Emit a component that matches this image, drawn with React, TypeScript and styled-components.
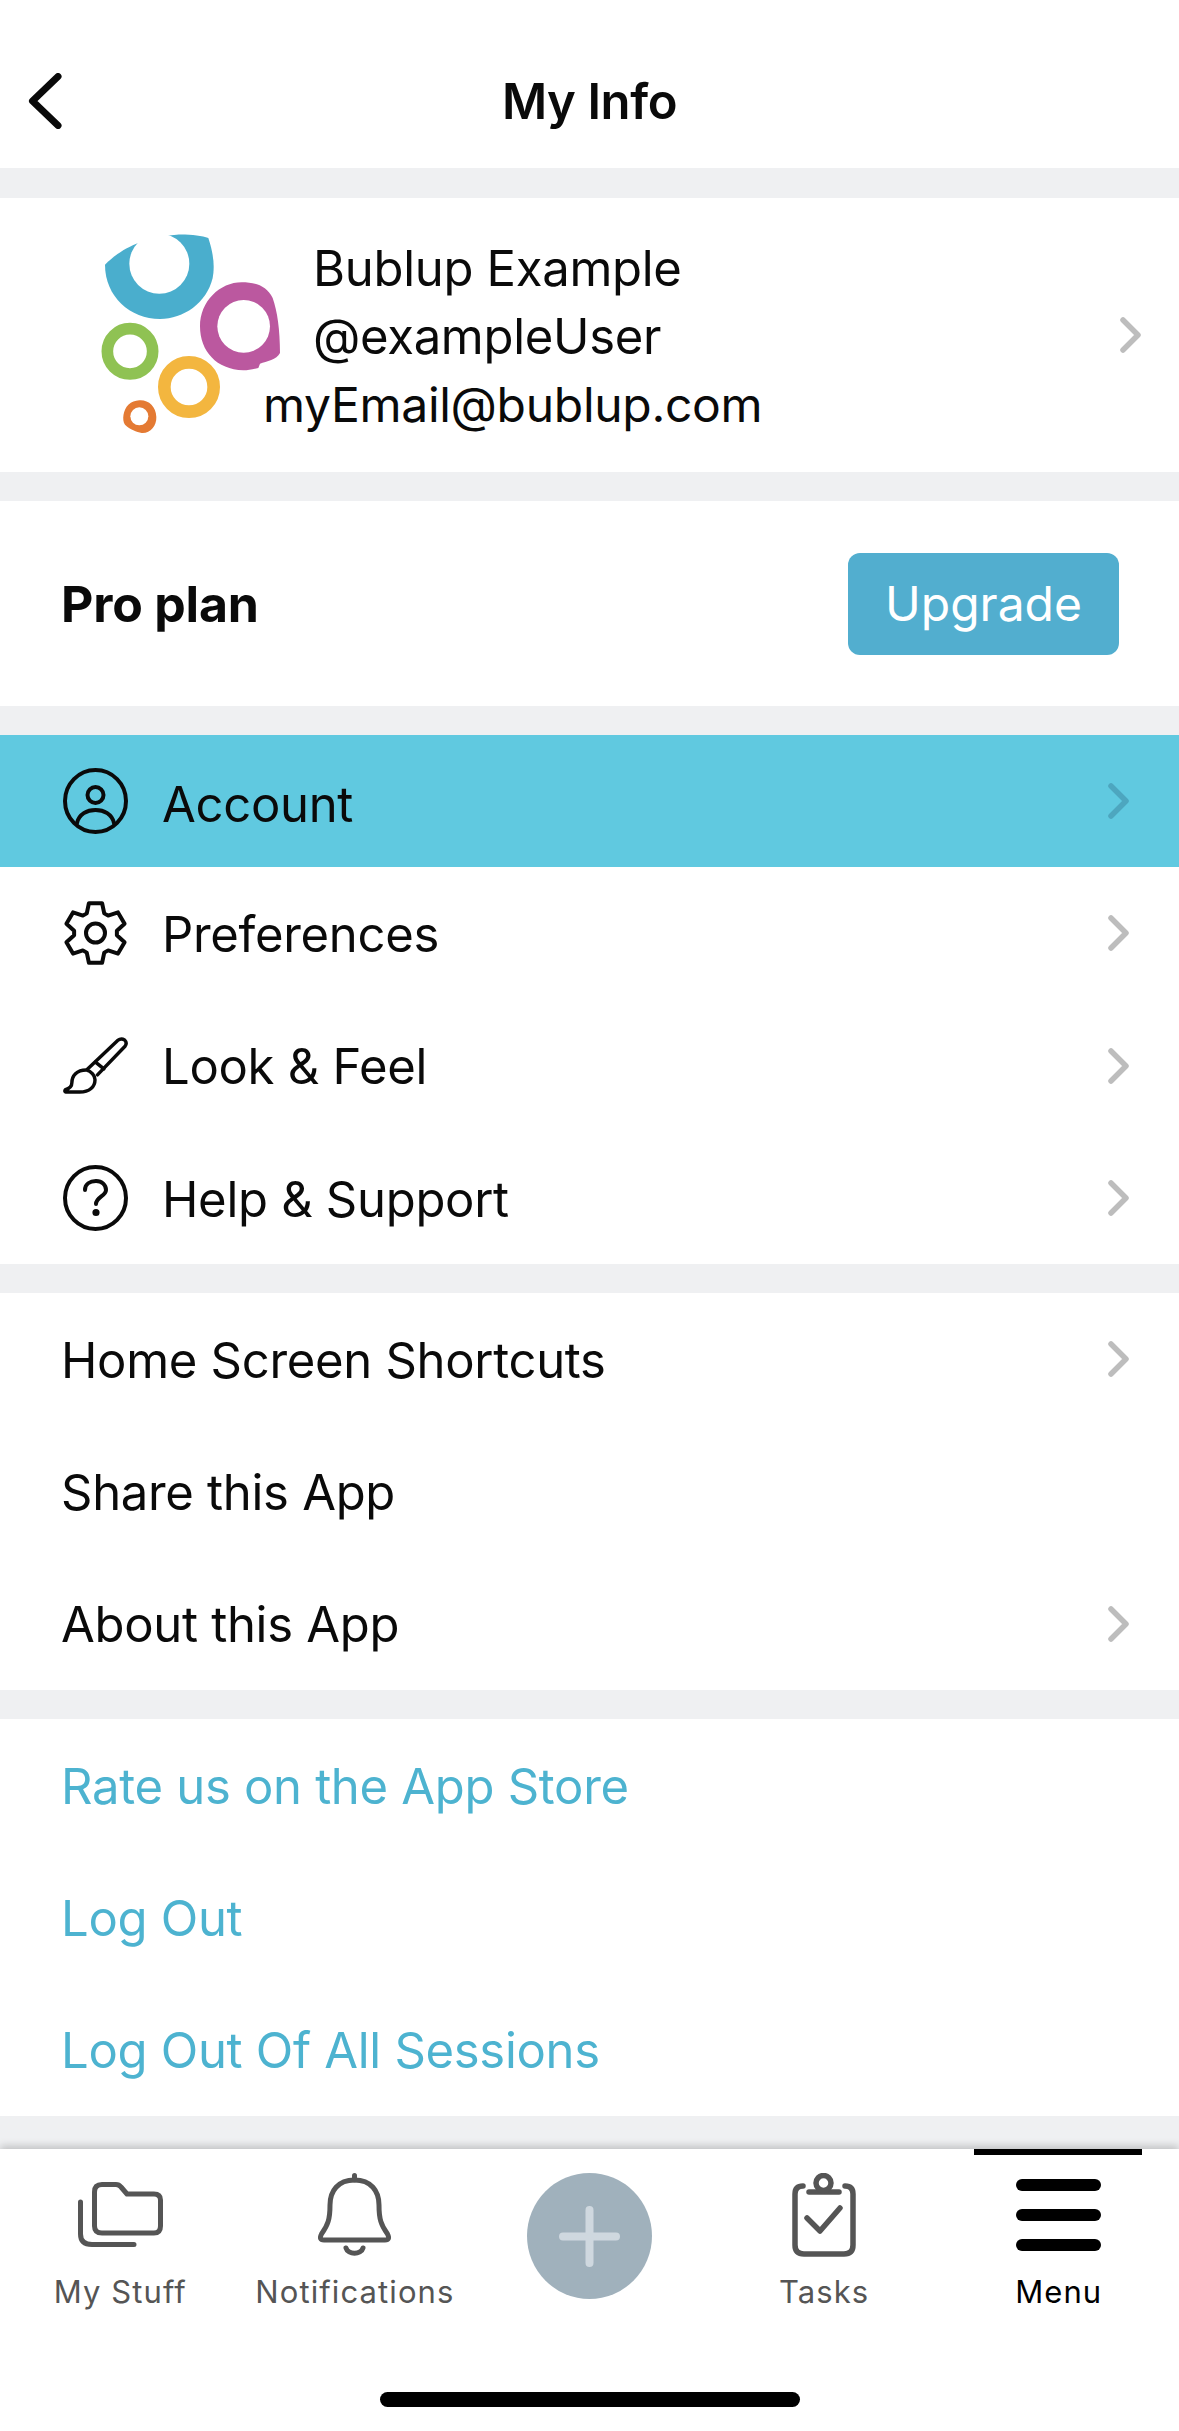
import React from "react";
import styled, { createGlobalStyle } from "styled-components";

const Global = createGlobalStyle`
  html, body { margin: 0; padding: 0; background: #fff; }
  * { box-sizing: border-box; }
`;

const Page = styled.div`
  width: 1179px;
  height: 2431px;
  overflow: hidden;
  display: flex;
  flex-direction: column;
  background: #eff0f2;
  font-family: Inter, "Liberation Sans", sans-serif;
  color: #0a0a0a;
`;

const Header = styled.header`
  height: 168px;
  flex: none;
  background: #fff;
  display: grid;
  grid-template-columns: 1fr auto 1fr;
  align-items: center;
  padding: 34px 28px 0;
`;

const BackIcon = styled.svg`
  width: 34px;
  height: 56px;
  margin-top: -1px;
`;

const Title = styled.h1`
  margin: 0;
  font-size: 49px;
  font-weight: 600;
  letter-spacing: -0.4px;
  line-height: 1;
`;

const Main = styled.main`
  flex: 1;
  display: flex;
  flex-direction: column;
  gap: 29px;
  padding-top: 30px;
`;

const Section = styled.section`
  background: #fff;
  display: flex;
  flex-direction: column;
`;

const Profile = styled(Section)`
  height: 274px;
  flex-direction: row;
  align-items: flex-start;
  padding: 35px 38px 0 100px;
`;

const LogoMark = styled.svg`
  width: 180px;
  height: 202px;
  flex: none;
`;

const ProfileText = styled.div`
  flex: 1;
  margin: 2px 0 0 -17px;
  font-size: 48px;
  font-weight: 400;
  line-height: 68px;
  letter-spacing: -0.3px;
`;

const IndentedLine = styled.div`
  margin-left: 50px;
  font-size: 49px;
`;

const ProfileChevron = styled.div`
  align-self: center;
  margin-top: -35px;
  display: flex;
`;

const Plan = styled(Section)`
  height: 205px;
  flex-direction: row;
  align-items: center;
  justify-content: space-between;
  padding: 0 60px 0 61px;
`;

const PlanName = styled.div`
  font-size: 50px;
  font-weight: 700;
  letter-spacing: -0.2px;
`;

const UpgradeButton = styled.button`
  width: 271px;
  height: 102px;
  border: none;
  border-radius: 12px;
  background: #52aecf;
  color: #fff;
  font: 400 48px Inter, "Liberation Sans", sans-serif;
  padding: 0;
`;

const Row = styled.div<{ $active?: boolean; $link?: boolean; $icon?: boolean }>`
  height: 132.3px;
  flex: none;
  display: flex;
  align-items: center;
  padding: 0 50px 0 ${(p) => (p.$icon ? "63px" : "61px")};
  background: ${(p) => (p.$active ? "#60c9e0" : "#fff")};
  color: ${(p) => (p.$link ? "#4db3d0" : "#0a0a0a")};
`;

const IconSlot = styled.div`
  width: 65px;
  height: 66px;
  flex: none;
  margin-right: 34px;
  display: flex;
  align-items: center;
  justify-content: center;
`;

const RowLabel = styled.span<{ $active?: boolean }>`
  flex: 1;
  font-size: 49px;
  letter-spacing: -0.3px;
  line-height: 1;
  margin-top: ${(p) => (p.$active ? "6px" : "2px")};
`;

const ChevronIcon = styled.svg<{ $tone?: string }>`
  width: 21px;
  height: 36px;
  flex: none;
  stroke: ${(p) => p.$tone || "#bdbdbd"};
`;

const TabBar = styled.nav`
  position: relative;
  height: 282px;
  flex: none;
  background: #fff;
  box-shadow: 0 -3px 8px rgba(0, 0, 0, 0.2);
  display: grid;
  grid-template-columns: repeat(5, 1fr);
  padding: 0 3px;
`;

const Tab = styled.div<{ $active?: boolean }>`
  position: relative;
  display: flex;
  flex-direction: column;
  align-items: center;
  color: ${(p) => (p.$active ? "#000" : "#555")};
  &::before {
    content: "";
    display: ${(p) => (p.$active ? "block" : "none")};
    position: absolute;
    top: 0;
    left: 33px;
    width: 168px;
    height: 6px;
    background: #000;
  }
`;

const TabIconBox = styled.div`
  height: 108px;
  width: 100%;
  padding-top: 24px;
  display: flex;
  justify-content: center;
`;

const TabLabel = styled.div`
  font-size: 31px;
  letter-spacing: 1.1px;
  line-height: 36px;
  margin-top: 17px;
`;

const MenuBars = styled.div`
  width: 85px;
  margin-top: 6px;
  display: flex;
  flex-direction: column;
  gap: 18px;
`;

const MenuBar = styled.i`
  display: block;
  height: 12px;
  border-radius: 6px;
  background: #000;
`;

const AddTab = styled.div`
  display: flex;
  justify-content: center;
  padding-top: 24px;
`;

const AddButton = styled.button`
  width: 125px;
  height: 126px;
  border: none;
  padding: 0;
  border-radius: 50%;
  background: #a0b1bc;
  display: flex;
  align-items: center;
  justify-content: center;
`;

const HomeIndicator = styled.div`
  position: absolute;
  left: 380px;
  top: 243px;
  width: 420px;
  height: 15px;
  border-radius: 8px;
  background: #000;
`;

const Chevron = ({ tone }: { tone?: string }) => (
  <ChevronIcon $tone={tone} viewBox="0 0 21 36" fill="none" strokeWidth="5.5" strokeLinecap="round" strokeLinejoin="round">
    <path d="M3 3 L18 18 L3 33" />
  </ChevronIcon>
);

const line = { fill: "none", stroke: "#0a0a0a", strokeWidth: 4, strokeLinecap: "round", strokeLinejoin: "round" } as const;

const gearPath = (() => {
  const pts: string[] = [];
  const cx = 32.5;
  const cy = 33;
  const pt = (r: number, deg: number) => {
    const a = (deg * Math.PI) / 180;
    return `${(cx + r * Math.cos(a)).toFixed(2)} ${(cy + r * Math.sin(a)).toFixed(2)}`;
  };
  for (let i = 0; i < 6; i++) {
    const a = -90 + 60 * i;
    pts.push(pt(21.5, a - 24), pt(30.5, a - 12.5), pt(30.5, a + 12.5), pt(21.5, a + 24));
  }
  return "M" + pts.join(" L") + " Z";
})();

const AccountIcon = () => (
  <svg width="65" height="66" viewBox="0 0 65 66" {...line}>
    <ellipse cx="32.5" cy="33" rx="30.5" ry="31" />
    <circle cx="32.5" cy="27" r="8" />
    <path d="M14 55 C16 46 24 42 32.5 42 C41 42 49 46 51 55" />
  </svg>
);

const GearIcon = () => (
  <svg width="65" height="66" viewBox="0 0 65 66" {...line}>
    <path d={gearPath} />
    <circle cx="32.5" cy="33" r="9.5" />
  </svg>
);

const BrushIcon = () => (
  <svg width="65" height="57" viewBox="0 0 66 57" {...line} strokeWidth={3.5}>
    <path d="M25 32 L55.5 3 Q59 0.5 62.5 2.5 Q65.5 5.5 63 9 L35 38" />
    <path d="M33 25 L41.5 32" />
    <path d="M23.5 33 C14 33 9 39 9 46 C9 50 6 52 2.5 53 Q1 55 3 55.5 H17 C27 55.5 32.5 50 32.5 43 C32.5 39 29 34.5 23.5 33 Z" />
  </svg>
);

const HelpIcon = () => (
  <svg width="65" height="66" viewBox="0 0 65 66" {...line}>
    <ellipse cx="32.5" cy="33" rx="30.5" ry="31" />
    <path d="M22 25 C22 19 27 16 33 16 C39 16 43 20 43 25 C43 31 33 32 33 39" />
    <circle cx="33" cy="47.5" r="1.6" fill="#0a0a0a" />
  </svg>
);

const Logo = () => (
  <LogoMark viewBox="60 40 540 606">
    <path d="M75 135 C120 90 180 55 290 45 C330 44 365 48 385 55 C400 100 405 140 398 175 C380 250 310 298 240 298 C150 298 75 230 75 135 Z" fill="#4aaecd" />
    <circle cx="238" cy="132" r="90" fill="#fff" />
    <path d="M485 188 C525 188 560 198 578 235 C592 275 600 330 600 400 C590 420 560 425 540 432 L535 445 C515 450 505 452 490 452 C410 450 360 395 360 320 C360 245 420 188 485 188 Z" fill="#bb589f" />
    <circle cx="491" cy="320" r="79" fill="#fff" />
    <circle cx="150" cy="395" r="68" fill="none" stroke="#8fc253" strokeWidth="35" />
    <circle cx="327" cy="502" r="74" fill="none" stroke="#f3b63f" strokeWidth="38" />
    <path d="M178 542 C205 540 228 560 229 592 C230 620 210 642 185 640 C170 636 150 630 135 615 C125 600 130 570 145 555 C155 547 165 543 178 542 Z" fill="#e47a33" />
    <circle cx="178" cy="590" r="27" fill="#fff" />
  </LogoMark>
);

const iconRows = [
  { label: "Account", icon: <AccountIcon />, active: true },
  { label: "Preferences", icon: <GearIcon /> },
  { label: "Look & Feel", icon: <BrushIcon /> },
  { label: "Help & Support", icon: <HelpIcon /> },
];

const plainRows = [
  { label: "Home Screen Shortcuts", chevron: true },
  { label: "Share this App", chevron: false },
  { label: "About this App", chevron: true },
];

const linkRows = ["Rate us on the App Store", "Log Out", "Log Out Of All Sessions"];

const tabStroke = { fill: "none", stroke: "#555", strokeLinecap: "round", strokeLinejoin: "round" } as const;

export default function App() {
  return (
    <Page>
      <Global />
      <Header>
        <BackIcon viewBox="0 0 34 56" fill="none" stroke="#0a0a0a" strokeWidth="7" strokeLinecap="round" strokeLinejoin="round">
          <path d="M30 3.5 L4.5 28 L30 52.5" />
        </BackIcon>
        <Title>My Info</Title>
      </Header>
      <Main>
        <Profile>
          <Logo />
          <ProfileText>
            <IndentedLine>Bublup Example</IndentedLine>
            <IndentedLine>@exampleUser</IndentedLine>
            <div>myEmail@bublup.com</div>
          </ProfileText>
          <ProfileChevron>
            <Chevron />
          </ProfileChevron>
        </Profile>
        <Plan>
          <PlanName>Pro plan</PlanName>
          <UpgradeButton>Upgrade</UpgradeButton>
        </Plan>
        <Section>
          {iconRows.map((r) => (
            <Row key={r.label} $icon $active={r.active}>
              <IconSlot>{r.icon}</IconSlot>
              <RowLabel $active={r.active}>{r.label}</RowLabel>
              <Chevron tone={r.active ? "#4da6bf" : undefined} />
            </Row>
          ))}
        </Section>
        <Section>
          {plainRows.map((r) => (
            <Row key={r.label}>
              <RowLabel>{r.label}</RowLabel>
              {r.chevron && <Chevron />}
            </Row>
          ))}
        </Section>
        <Section>
          {linkRows.map((l) => (
            <Row key={l} $link>
              <RowLabel>{l}</RowLabel>
            </Row>
          ))}
        </Section>
      </Main>
      <TabBar>
        <Tab>
          <TabIconBox>
            <svg width="85" height="65" viewBox="0 0 85 65" {...tabStroke} strokeWidth="5" style={{ marginTop: 9 }}>
              <path d="M24 2.5 H38 Q41 2.5 43 5 L49 12 H76 Q82.5 12 82.5 18 V44 Q82.5 51 76 51 H24 Q16.5 51 16.5 44 V10 Q16.5 2.5 24 2.5 Z" />
              <path d="M2.5 20 V52 Q2.5 62.5 14 62.5 H56" />
            </svg>
          </TabIconBox>
          <TabLabel>My Stuff</TabLabel>
        </Tab>
        <Tab>
          <TabIconBox>
            <svg width="73" height="84" viewBox="0 0 73 84" {...tabStroke} strokeWidth="5">
              <path d="M36.5 2.5 V7" />
              <path d="M36.5 7 C20 7 12 18 12 32 C12 46 10 52 3.5 61 Q0.5 67 6 67 H67 Q72.5 67 69.5 61 C63 52 61 46 61 32 C61 18 53 7 36.5 7 Z" />
              <path d="M28 75 C30 82 43 82 45 75" />
            </svg>
          </TabIconBox>
          <TabLabel>Notifications</TabLabel>
        </Tab>
        <AddTab>
          <AddButton aria-label="Add">
            <svg width="61" height="61" viewBox="0 0 61 61" fill="none" stroke="#cfd8df" strokeWidth="8" strokeLinecap="round">
              <path d="M30.5 4 V57 M4 30.5 H57" />
            </svg>
          </AddButton>
        </AddTab>
        <Tab>
          <TabIconBox>
            <svg width="64" height="84" viewBox="0 0 64 84" {...tabStroke} strokeWidth="5.5">
              <path d="M11 13 Q3 13 3 21 V72 Q3 81 12 81 H52 Q61 81 61 72 V21 Q61 13 53 13" />
              <path d="M17 19 H47" />
              <circle cx="31.5" cy="10" r="7.5" />
              <path d="M15 45 L28 58 L48 35" />
            </svg>
          </TabIconBox>
          <TabLabel>Tasks</TabLabel>
        </Tab>
        <Tab $active>
          <TabIconBox>
            <MenuBars>
              <MenuBar />
              <MenuBar />
              <MenuBar />
            </MenuBars>
          </TabIconBox>
          <TabLabel>Menu</TabLabel>
        </Tab>
        <HomeIndicator />
      </TabBar>
    </Page>
  );
}
